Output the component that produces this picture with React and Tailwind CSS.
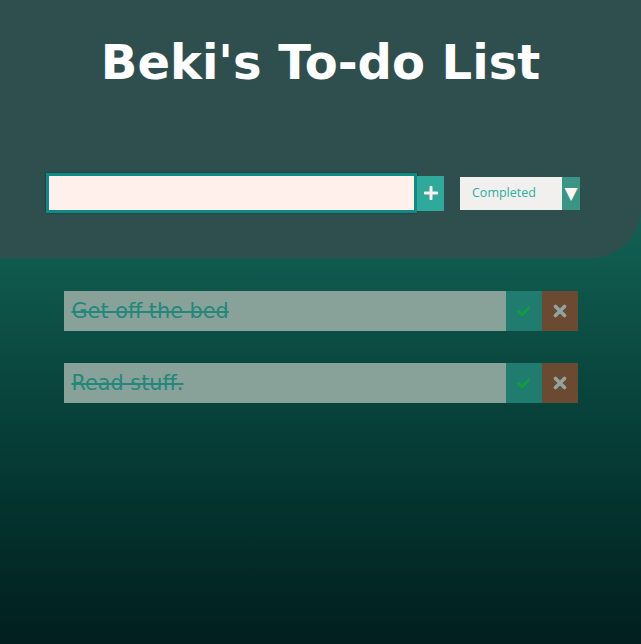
import React, { useState } from "react";
import { FaCheck, FaPlus } from "react-icons/fa";

const initialTodos = [
  { id: 1, text: "Get off the bed", completed: true },
  { id: 2, text: "Read stuff.", completed: true },
];

// thick "times" glyph, the icon set's one is too thin here
const TimesIcon = () => (
  <svg width="14" height="14" viewBox="0 0 14 14">
    <path d="M2.5 2.5 L11.5 11.5 M11.5 2.5 L2.5 11.5" stroke="#90a39e" strokeWidth="3.6" strokeLinecap="round" />
  </svg>
);

const TodoItem = ({ todo, onToggle, onDelete }) => (
  <div className="flex h-10 w-full">
    <div className="flex flex-1 items-center bg-[#88a29a] pl-2 pt-[2px]">
      <span
        className={`text-[20.8px] text-[#23877a] ${todo.completed ? "line-through" : ""}`}
        style={{ fontFamily: "'DejaVu Sans', sans-serif" }}
      >
        {todo.text}
      </span>
    </div>
    <button
      onClick={() => onToggle(todo.id)}
      className="flex w-9 items-center justify-center bg-[#1f7c6f]"
    >
      <FaCheck size={13} color="#0fa03b" />
    </button>
    <button
      onClick={() => onDelete(todo.id)}
      className="flex w-9 items-center justify-center bg-[#6c4a32]"
    >
      <TimesIcon />
    </button>
  </div>
);

const App = () => {
  const [todos, setTodos] = useState(initialTodos);
  const [input, setInput] = useState("");
  const [filter, setFilter] = useState("completed");

  const addTodo = (e) => {
    e.preventDefault();
    if (!input.trim()) return;
    setTodos((prev) => [...prev, { id: Date.now(), text: input.trim(), completed: false }]);
    setInput("");
  };

  const toggleTodo = (id) =>
    setTodos((prev) => prev.map((t) => (t.id === id ? { ...t, completed: !t.completed } : t)));

  const deleteTodo = (id) => setTodos((prev) => prev.filter((t) => t.id !== id));

  const visible = todos.filter((t) =>
    filter === "all" ? true : filter === "completed" ? t.completed : !t.completed
  );

  return (
    <div
      className="min-h-[644px] bg-linear-to-b from-[#1f8671] to-[#011f1e]"
      style={{ fontFamily: "'DejaVu Sans', sans-serif" }}
    >
      {/* Header */}
      <header className="h-[258px] rounded-br-[50px] bg-[#2f4f4f] pt-[34px]">
        <h1 className="text-center text-[48px] font-bold leading-[56px] text-white">
          Beki's To-do List
        </h1>

        <form onSubmit={addTodo} className="mt-[83px] flex items-center pl-[46px]">
          <input
            autoFocus
            value={input}
            onChange={(e) => setInput(e.target.value)}
            className="h-10 w-[371px] border-[3px] border-[#0e8b84] bg-[#fff0ec] px-1 text-2xl text-[#333] caret-[#333] shadow-[0_0_2px_rgba(0,0,0,0.45)] outline-none"
          />
          <button
            type="submit"
            className="flex h-[35px] w-[27px] items-center justify-center bg-[#2fa999]"
          >
            <FaPlus size={16} color="#fdeeee" />
          </button>

          <div className="ml-4 flex h-[33px] w-[120px] bg-[#f1f0ee]">
            <select
              value={filter}
              onChange={(e) => setFilter(e.target.value)}
              className="flex-1 appearance-none bg-transparent pl-3 text-[12.5px] text-[#2eae9f] outline-none"
              style={{ fontFamily: "'Open Sans', sans-serif" }}
            >
              <option value="all">All</option>
              <option value="completed">Completed</option>
              <option value="uncompleted">Uncompleted</option>
            </select>
            <div className="flex w-[18px] items-center justify-center bg-[#3a9585] text-[17px] leading-none text-[#fff4f2]">
              ▼
            </div>
          </div>
        </form>
      </header>

      {/* Todo list */}
      <ul className="mx-auto flex w-[514px] flex-col gap-8 pt-[33px]">
        {visible.map((todo) => (
          <li key={todo.id}>
            <TodoItem todo={todo} onToggle={toggleTodo} onDelete={deleteTodo} />
          </li>
        ))}
      </ul>
    </div>
  );
};

export default App;
